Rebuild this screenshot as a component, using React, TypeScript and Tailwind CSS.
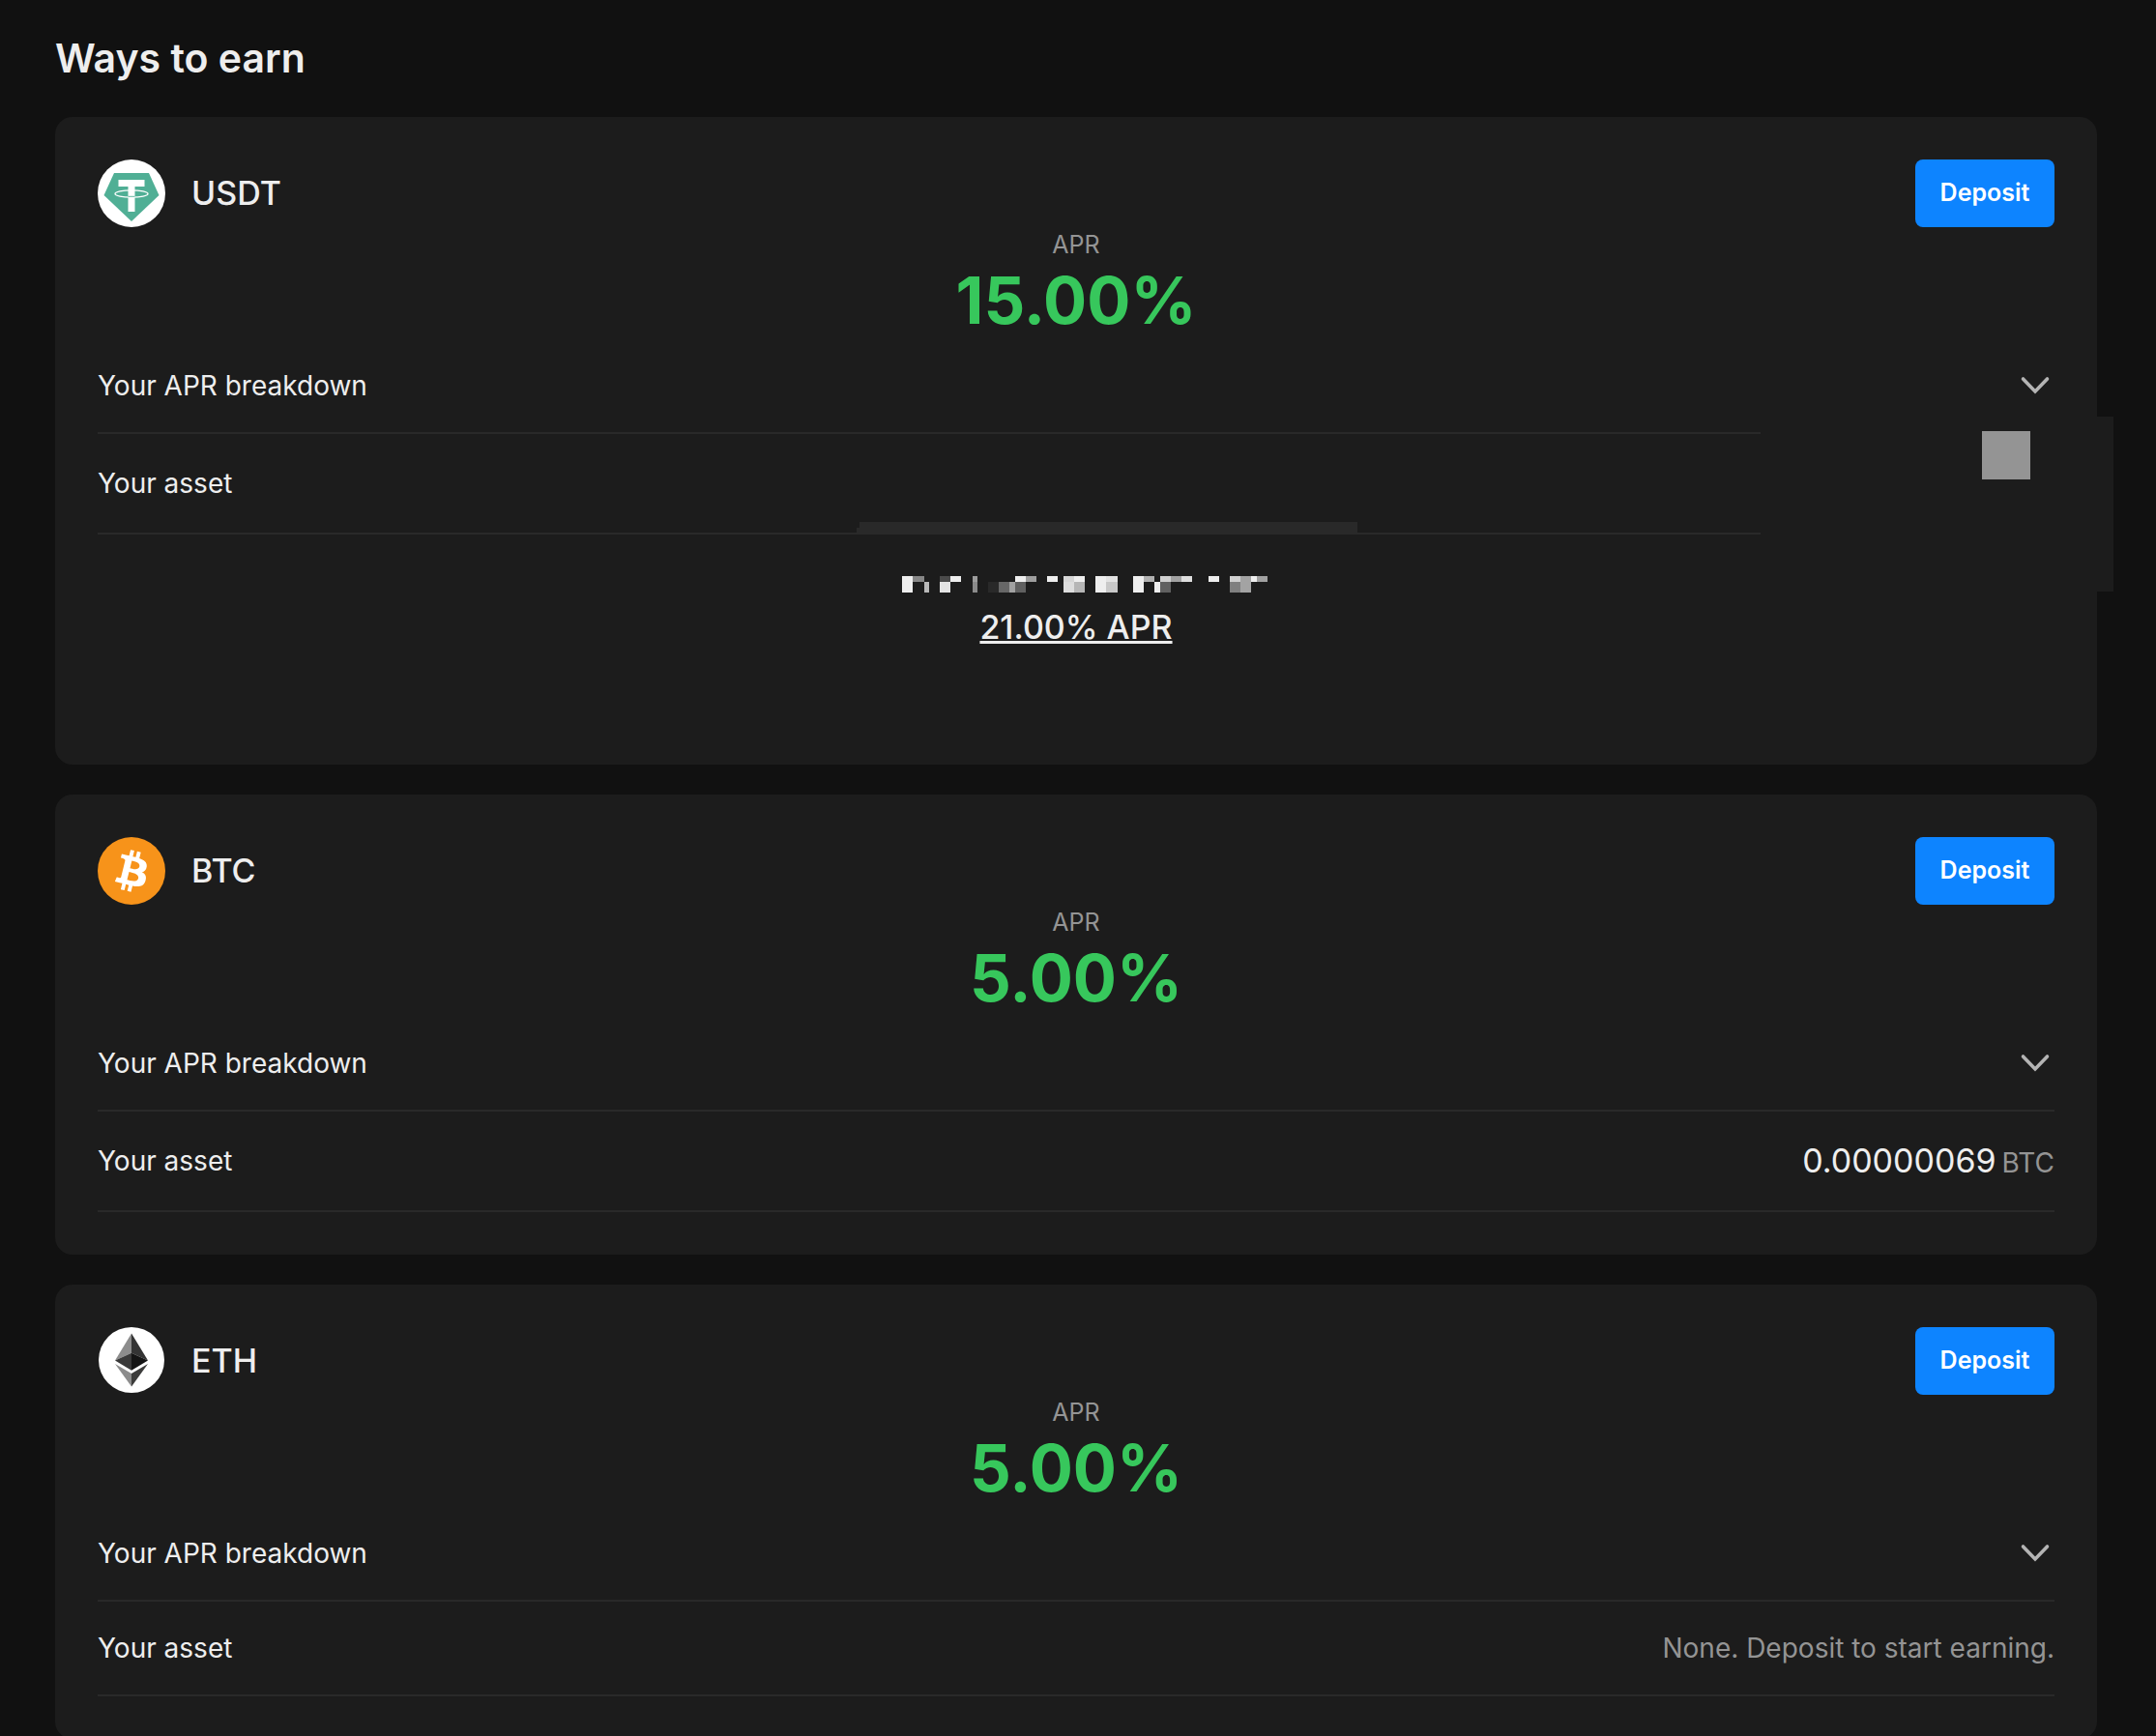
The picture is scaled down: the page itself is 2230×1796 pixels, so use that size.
import React from "react";

function UsdtLogo() {
  return (
    <svg viewBox="0 0 70 70" className="size-[70px]" aria-hidden="true">
      <circle cx="35" cy="35" r="35" fill="#fff" />
      <path d="M17 14h36l10.500 23L35 64 6.500 37z" fill="#50af95" />
      <path d="M21.500 21h27v7H38.500v26h-7V28h-10z" fill="#fff" />
      <ellipse cx="35" cy="35.500" rx="17" ry="3.600" fill="none" stroke="#fff" strokeWidth="1.300" />
      <path d="M31.500 38.300h7" stroke="#50af95" strokeWidth="0.900" />
    </svg>
  );
}

function BtcLogo() {
  return (
    <svg viewBox="0 0 32 32" className="size-[70px]" aria-hidden="true">
      <circle cx="16" cy="16" r="16" fill="#f7931a" />
      <path
        fill="#fff"
        d="M23.189 14.020c.314-2.096-1.283-3.223-3.465-3.975l.708-2.840-1.728-.430-.690 2.765c-.454-.114-.920-.220-1.385-.326l.695-2.783L15.596 6l-.708 2.839c-.376-.086-.746-.170-1.104-.260l.002-.009-2.384-.595-.460 1.846s1.283.294 1.256.312c.700.175.826.638.805 1.006l-.806 3.235c.048.012.110.030.180.057l-.183-.045-1.130 4.532c-.086.212-.303.531-.793.410.018.025-1.256-.313-1.256-.313l-.858 1.978 2.250.561c.418.105.828.215 1.231.318l-.715 2.872 1.727.430.708-2.840c.472.127.930.245 1.378.357l-.706 2.828 1.728.430.715-2.866c2.948.558 5.164.333 6.097-2.333.752-2.146-.037-3.385-1.588-4.192 1.130-.260 1.980-1.003 2.207-2.538zm-3.950 5.538c-.533 2.147-4.148.986-5.320.695l.950-3.805c1.172.293 4.929.872 4.370 3.110zm.535-5.569c-.487 1.953-3.495.960-4.470.717l.860-3.450c.975.243 4.118.696 3.610 2.733z"
      />
    </svg>
  );
}

function EthLogo() {
  return (
    <svg viewBox="0 0 70 70" className="size-[70px]" aria-hidden="true">
      <circle cx="35" cy="34" r="34" fill="#fff" />
      <path d="M35 6.500v20.200L18 34.500z" fill="#8c8c8c" />
      <path d="M35 6.500v20.200l17 7.800z" fill="#343434" />
      <path d="M35 26.700v18L18 34.500z" fill="#393939" />
      <path d="M35 26.700v18l17-10.200z" fill="#141414" />
      <path d="M35 48v13.500L18 38z" fill="#8c8c8c" />
      <path d="M35 48v13.500L52 38z" fill="#3c3c3b" />
    </svg>
  );
}

// Blocks of the pixelated line: x, y, width, height, fill.
const MOSAIC: [number, number, number, number, string][] = [
  [0, 0, 11, 17, "#eeeeee"], [11, 0, 12, 6, "#868686"], [23, 6, 5, 11, "#b8b8b8"],
  [39, 0, 11, 6, "#4b4b4b"], [50, 0, 11, 6, "#eeeeee"], [39, 6, 11, 11, "#e4e4e4"],
  [73, 0, 5, 6, "#9c9c9c"], [73, 6, 5, 11, "#8a8a8a"],
  [89, 6, 11, 11, "#292929"], [100, 6, 11, 11, "#676767"], [111, 6, 6, 11, "#a1a1a1"],
  [117, 0, 11, 6, "#eeeeee"], [117, 6, 11, 11, "#606060"], [128, 0, 11, 6, "#9e9e9e"],
  [150, 0, 11, 6, "#eeeeee"],
  [167, 0, 11, 6, "#d6d6d6"], [178, 0, 11, 6, "#eeeeee"], [167, 6, 11, 11, "#dddddd"], [178, 6, 11, 11, "#b6b6b6"],
  [200, 0, 11, 17, "#eeeeee"], [211, 0, 12, 6, "#e2e2e2"], [211, 6, 12, 11, "#c8c8c8"],
  [239, 0, 11, 17, "#eeeeee"], [250, 0, 11, 6, "#b0b0b0"], [261, 6, 6, 11, "#eeeeee"],
  [267, 0, 11, 6, "#cfcfcf"], [267, 6, 11, 11, "#606060"], [278, 0, 11, 6, "#a1a1a1"], [289, 0, 11, 6, "#dedede"],
  [317, 0, 11, 6, "#eeeeee"],
  [339, 0, 11, 6, "#d0d0d0"], [339, 6, 11, 11, "#808080"], [350, 0, 11, 17, "#a3a3a3"],
  [361, 0, 6, 6, "#eeeeee"], [367, 0, 11, 6, "#a1a1a1"],
];

function Mosaic() {
  return (
    <svg viewBox="0 0 378 17" className="ml-[18px] h-[17px] w-[378px]" shapeRendering="crispEdges" aria-hidden="true">
      {MOSAIC.map(([x, y, w, h, fill], i) => (
        <rect key={i} x={x} y={y} width={w} height={h} fill={fill} />
      ))}
    </svg>
  );
}

type CardProps = {
  symbol: string;
  logo: React.ReactNode;
  apr: string;
  short?: boolean;
  asset?: React.ReactNode;
  overlay?: React.ReactNode;
  children?: React.ReactNode;
};

function EarnCard({ symbol, logo, apr, short, asset, overlay, children }: CardProps) {
  return (
    <section className="relative rounded-[18px] bg-[#1c1c1c] p-11">
      <header className="flex h-[70px] items-center justify-between">
        <div className="flex items-center gap-[27px]">
          {logo}
          <h2 className="pb-0.5 text-[34px] font-medium">{symbol}</h2>
        </div>
        <button type="button" className="h-[70px] w-36 rounded-lg bg-[#0d84ff] text-[25px] font-semibold text-white">
          Deposit
        </button>
      </header>
      <div className="flex flex-col items-center">
        <p className="text-[25px] leading-9 text-[#949494]">APR</p>
        <p className="text-[67px] leading-[80px] font-bold text-[#37c75c]">{apr}</p>
      </div>
      <button type="button" className="flex h-[98px] w-full items-center justify-between border-b-2 border-[#292929] text-left text-[28px]">
        <span>Your APR breakdown</span>
        <svg viewBox="0 0 40 40" className="size-10" fill="none" stroke="#b4b4b4" strokeWidth="3.600" aria-hidden="true">
          <path d="M7.500 13 20 26l12.500-13" strokeLinecap="round" />
        </svg>
      </button>
      <div className={`flex items-center justify-between border-b-2 border-[#292929] text-[28px] ${short ? "h-[98px]" : "h-[104px]"}`}>
        <span>Your asset</span>
        {asset}
      </div>
      {children}
      {overlay}
    </section>
  );
}

export default function App() {
  return (
    <main className="h-screen overflow-hidden bg-[#111111] pr-[61px] pl-[57px] font-['Inter',sans-serif] text-[#eeeeee]">
      <h1 className="pt-8 pb-[33px] text-[41px] leading-14 font-semibold">Ways to earn</h1>
      <div className="flex flex-col gap-[31px]">
        <EarnCard
          symbol="USDT"
          logo={<UsdtLogo />}
          apr="15.00%"
          overlay={
            <>
              <div className="absolute top-[310px] -right-[17px] h-[181px] w-[365px] bg-[#1c1c1c]" />
              <div className="absolute top-[325px] right-[69px] size-[50px] bg-[#949494]" />
              <div className="absolute top-[419px] left-[832px] h-3 w-[515px] bg-[#292929]" />
              <div className="absolute top-[425px] left-[829px] h-1.5 w-[3px] bg-[#292929]" />
            </>
          }
        >
          <div className="flex h-[194px] flex-col items-center pt-[43px]">
            <Mosaic />
            <a href="#usdt-apr" className="mt-3 text-[34px] leading-12 font-medium underline decoration-[3px]">
              21.00% APR
            </a>
          </div>
        </EarnCard>
        <EarnCard
          symbol="BTC"
          logo={<BtcLogo />}
          apr="5.00%"
          asset={
            <span className="flex items-baseline gap-1.5 pb-0.5 text-[34px]">
              0.00000069
              <span className="text-[28px] text-[#949494]">BTC</span>
            </span>
          }
        />
        <EarnCard
          symbol="ETH"
          logo={<EthLogo />}
          apr="5.00%"
          short
          asset={<span className="text-[#949494]">None. Deposit to start earning.</span>}
        />
      </div>
    </main>
  );
}
